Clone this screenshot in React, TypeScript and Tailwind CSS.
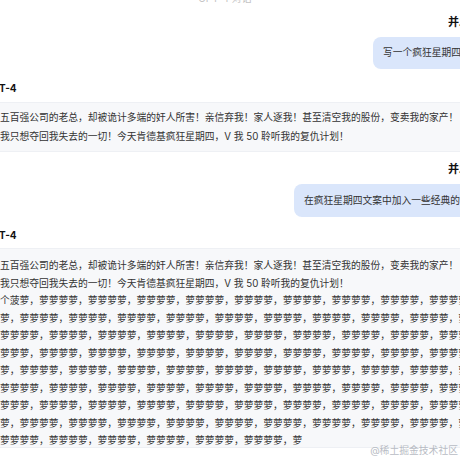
import React from 'react';

const unit = '萝萝萝萝，';
const line1 =
  '五百强公司的老总，却被诡计多端的奸人所害！亲信弃我！家人逐我！甚至清空我的股份，变卖我的家产！';
const line2 = '我只想夺回我失去的一切！今天肯德基疯狂星期四，V 我 50 聆听我的复仇计划！';

const pineappleLines = [
  '个菠萝，' + unit.repeat(10),
  '萝，' + unit.repeat(10),
  unit.repeat(10),
  '萝萝萝，' + unit.repeat(10),
  '萝，' + unit.repeat(10),
  unit.repeat(10),
  '萝萝萝，' + unit.repeat(10),
  '萝，' + unit.repeat(10),
  unit.repeat(6) + '萝',
];

const UserName: React.FC<{ className?: string }> = ({ className }) => (
  <div className={`flex justify-end h-[14px] ${className ?? ''}`}>
    <span className="shrink-0 whitespace-nowrap -mr-[10px] text-[11px] leading-[14px] font-semibold text-[#111]">
      并发
    </span>
  </div>
);

const Bubble: React.FC<{ text: string; left: string; className?: string }> = ({
  text,
  left,
  className,
}) => (
  <div className={`flex ${className ?? ''}`}>
    <div
      className={`${left} shrink-0 whitespace-nowrap rounded-[8px] bg-[#dae6fb] px-[10px] text-[9.75px] text-[#333]`}
    >
      {text}
    </div>
  </div>
);

const ModelName: React.FC<{ className?: string }> = ({ className }) => (
  <div className={`flex h-[14px] whitespace-nowrap ${className ?? ''}`}>
    <span className="shrink-0 -ml-[15px] text-[10px] leading-[14px] font-bold text-[#111]">
      GPT-4
    </span>
  </div>
);

const App: React.FC = () => {
  return (
    <div
      className="relative w-[460px] h-[460px] overflow-hidden bg-white"
      style={{ fontFamily: 'Inter, "Noto Sans CJK SC", sans-serif' }}
    >
      <div className="flex h-[8px] overflow-hidden justify-center pr-[10px]">
        <span className="-mt-[7px] text-[10px] leading-[10px] text-[#c4c4c4] whitespace-nowrap">
          GPT-4 对话
        </span>
      </div>

      <UserName className="mt-[7px]" />
      <Bubble
        text="写一个疯狂星期四文案"
        left="ml-[373px] h-[32px] leading-[32px]"
        className="mt-[8px]"
      />

      <ModelName className="mt-[12px]" />
      <div className="mt-[7px] h-[50px] border-y border-[#eef0f4] bg-[#f7f8fa] pt-[5px] text-[9.75px] leading-[19px] text-[#333]">
        <div className="whitespace-nowrap">{line1}</div>
        <div className="whitespace-nowrap">{line2}</div>
      </div>

      <UserName className="mt-[10px]" />
      <Bubble
        text="在疯狂星期四文案中加入一些经典的梗"
        left="ml-[294px] h-[33px] leading-[33px]"
        className="mt-[8px]"
      />

      <ModelName className="mt-[11px]" />
      <div className="mt-[6px] h-[200px] border-y border-[#eef0f4] bg-[#f7f8fa] pt-[8px] text-[9.75px] leading-[17.5px] text-[#333]">
        <div className="whitespace-nowrap">{line1}</div>
        <div className="whitespace-nowrap">{line2}</div>
        {pineappleLines.map((l, i) => (
          <div key={i} className="whitespace-nowrap">
            {l}
          </div>
        ))}
      </div>

      <div className="absolute right-[2px] bottom-[4px] text-[9.8px] leading-[10px] text-[#b8bcc4] whitespace-nowrap">
        @稀土掘金技术社区
      </div>
    </div>
  );
};

export default App;
